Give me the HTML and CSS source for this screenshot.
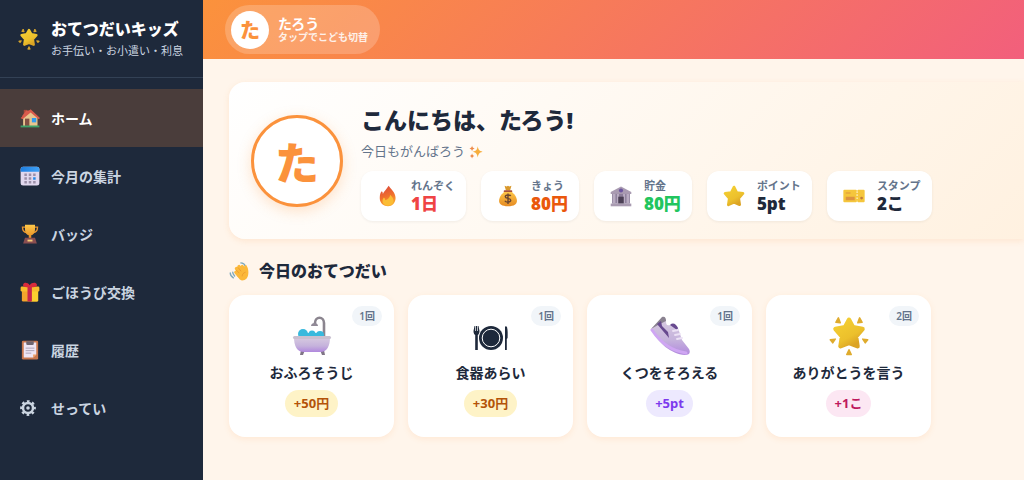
FILE: index.html
```html
<!DOCTYPE html>
<html lang="ja">
<head>
    <meta charset="UTF-8">
    <meta name="viewport" content="width=device-width, initial-scale=1.0">
    <title>おてつだいキッズ</title>
    <link rel="stylesheet" href="styles.css">
</head>
<body>

    <!-- アイコン定義 -->
    <svg class="icon-defs" aria-hidden="true">
        <defs>
            <linearGradient id="gold" x1="0" y1="0" x2="0.6" y2="1">
                <stop offset="0" stop-color="#f5d033"/>
                <stop offset="0.7" stop-color="#ecc02c"/>
                <stop offset="1" stop-color="#dba324"/>
            </linearGradient>
            <linearGradient id="amber" x1="0" y1="0" x2="0" y2="1">
                <stop offset="0" stop-color="#ffc94a"/>
                <stop offset="1" stop-color="#e58a22"/>
            </linearGradient>
            <linearGradient id="flame" x1="0" y1="0" x2="0.3" y2="1">
                <stop offset="0" stop-color="#d9433f"/>
                <stop offset="0.6" stop-color="#f0702c"/>
                <stop offset="1" stop-color="#f9a52e"/>
            </linearGradient>
            <linearGradient id="lilac" x1="0" y1="0" x2="0" y2="1">
                <stop offset="0" stop-color="#d8cce0"/>
                <stop offset="0.6" stop-color="#c5b2dc"/>
                <stop offset="1" stop-color="#b088dd"/>
            </linearGradient>
            <linearGradient id="sky" x1="0" y1="0" x2="1" y2="0">
                <stop offset="0" stop-color="#1f7fe0"/>
                <stop offset="1" stop-color="#3fa0f5"/>
            </linearGradient>
        </defs>

        <symbol id="i-glow" viewBox="0 0 32 32">
            <path fill="url(#gold)" stroke="url(#gold)" stroke-width="3.6" stroke-linejoin="round" d="M16 3l3.200 6 7.600 1.400-5.200 6 1.200 7.800-6.800-2.700-6.800 2.700 1.200-7.800-5.200-6L12.800 9z"/>
            <g fill="#dfab2e" stroke="#dfab2e" stroke-width="1.2" stroke-linejoin="round">
                <path d="M7.500 1.500l1.500 4-3.500-.5zM24.500 1.500l-1.500 4 3.500-.5zM1 19l4-.5-2 3zM31 19l-4-.5 2 3zM16 27l1.800 3.800h-3.600z"/>
            </g>
        </symbol>

        <symbol id="i-star" viewBox="0 0 32 32">
            <path fill="url(#gold)" stroke="url(#gold)" stroke-width="4" stroke-linejoin="round" d="M16 3l4 8 9 1.300-6.200 7 1.400 9.400L16 25l-8.200 3.700 1.400-9.400-6.200-7L12 11z"/>
        </symbol>

        <symbol id="i-home" viewBox="0 0 32 32">
            <path fill="#a84a3c" d="M6 3h5v10H6z"/>
            <path fill="#e8c58f" d="M5 14L17 5l11 10v14H5z"/>
            <path fill="#d95b4c" d="M17 2l15 14-2 2L17 7 4 18l-3-2z"/>
            <path fill="#d95b4c" d="M17 5L3 17l1-5L10 4h6z"/>
            <path fill="#825044" d="M8 17h7v12H8z"/>
            <path fill="#319bed" d="M19 16h7v7h-7z"/>
            <path fill="#3da36a" d="M1 28h30v3H1z"/>
        </symbol>

        <symbol id="i-calendar" viewBox="0 0 32 32">
            <rect x="1" y="1" width="30" height="30" rx="4" fill="#e1d8ee"/>
            <path fill="url(#sky)" d="M1 9V5a4 4 0 0 1 4-4h22a4 4 0 0 1 4 4v4z"/>
            <path fill="#9b8fa8" d="M7 12h4v4H7zM14 12h4v4h-4zM21 12h4v4h-4zM7 18h4v4H7zM14 18h4v4h-4zM7 24h4v4H7zM14 24h4v4h-4zM21 24h4v4h-4z"/>
            <path fill="#2388e8" d="M21 18h4v4h-4z"/>
        </symbol>

        <symbol id="i-trophy" viewBox="0 0 32 32">
            <path fill="none" stroke="#e5932f" stroke-width="2.200" d="M9 5H4c0 5 2 8 7 9M23 5h5c0 5-2 8-7 9"/>
            <path fill="url(#amber)" d="M8 1h16v8c0 5-3 8-6 9v5h-4v-5c-3-1-6-4-6-9z"/>
            <path fill="#8a4e50" d="M8 22h16l3 9H5z"/>
            <path fill="#f5cf7b" d="M12 25h8v3h-8z"/>
        </symbol>

        <symbol id="i-gift" viewBox="0 0 32 32">
            <path fill="#f3a52c" d="M3 13h26v16a2 2 0 0 1-2 2H5a2 2 0 0 1-2-2z"/>
            <path fill="#fcd02f" d="M18 13h11v16a2 2 0 0 1-2 2h-9z"/>
            <rect x="1" y="7" width="30" height="8" rx="2" fill="#f8bd2d"/>
            <path fill="#c9264c" d="M12 7h7v24h-7z"/>
            <path fill="#d92b3b" d="M15.500 8C9 9 4 8 5 4s7-4 10.500 1C19 0 26 0 27 4s-5 5-11.500 4z"/>
        </symbol>

        <symbol id="i-clipboard" viewBox="0 0 32 32">
            <rect x="3" y="1" width="26" height="30" rx="2" fill="#c9784f"/>
            <path fill="#eee5f4" d="M6 4h20v19l-5 5H6z"/>
            <path fill="#f0a060" d="M26 23l-5 5v-5z"/>
            <path fill="#6d6470" d="M10 2h12v4a2 2 0 0 1-2 2h-8a2 2 0 0 1-2-2z"/>
            <path stroke="#aaa0b4" stroke-width="1.500" d="M9 13h14M9 17h14M9 21h9"/>
        </symbol>

        <symbol id="i-gear" viewBox="0 0 32 32">
            <g fill="none" stroke="currentColor">
                <circle cx="16" cy="16" r="10" stroke-width="5"/>
                <circle cx="16" cy="16" r="13.500" stroke-width="4.500" stroke-dasharray="5.300 5.303" stroke-dashoffset="2.650"/>
            </g>
            <circle cx="16" cy="16" r="3.600" fill="currentColor"/>
        </symbol>

        <symbol id="i-sparkles" viewBox="0 0 32 32">
            <path fill="#f7ae3d" d="M20 3c1.500 8 3 10 11 12.500-8 2.500-9.500 5-11 13-1.500-8-3-10.500-11-13C17 13 18.500 11 20 3z"/>
            <path fill="#ee8b4a" d="M7 1c.9 4.500 1.800 5.500 6 7-4.200 1.200-5.100 2.500-6 7-.9-4.500-1.800-5.800-6-7 4.200-1.500 5.100-2.500 6-7zM7 19c.8 3.500 1.600 4.700 5 6-3.400 1.200-4.200 2.500-5 6-.8-3.500-1.600-4.800-5-6 3.400-1.300 4.200-2.500 5-6z"/>
        </symbol>

        <symbol id="i-fire" viewBox="0 0 32 32">
            <path fill="url(#flame)" d="M17 1c2 4 10 9 10 18 0 7-5 12-11 12S4 27 4 19c0-5 1-9 3-10 1 1 1.500 2 1.500 4C10 9 14 6 17 1z"/>
            <path fill="#fbbd35" d="M19 14c4 4 5 6 5 9 0 4-3 7-8 7s-8-3-8-7c0-2 1-4 2-5 1 1 2 2 2 4 4-1 7-4 7-8z"/>
        </symbol>

        <symbol id="i-money" viewBox="0 0 32 32">
            <path fill="#d9982c" d="M11 1l3 1 2-1 2 1 3-1-2 7h-6z"/>
            <path fill="url(#amber)" d="M12 9h8c5 3 9 9 9 14s-4 8-13 8S3 28 3 23 7 12 12 9z"/>
            <path stroke="#a8513a" stroke-width="2.500" stroke-linecap="round" d="M11 9h10"/>
            <path fill="none" stroke="#6b4630" stroke-width="2" d="M20 16c-1-2-8-2-8 1s8 2 8 5-7 4-8.500 1M16 12.500v15"/>
        </symbol>

        <symbol id="i-bank" viewBox="0 0 32 32">
            <path fill="#a99bb1" d="M16 2l15 8v3H1v-3z"/>
            <path fill="#8b7d98" d="M3 13h26v14H3z"/>
            <path fill="#b9acc2" d="M4 13h4v14H4zM10 13h3v14h-3zM19 13h3v14h-3zM24 13h4v14h-4z"/>
            <path fill="#4b4055" d="M12 17h8v10h-8z"/>
            <path fill="#a99bb1" d="M1 27h30v4H1z"/>
            <circle cx="16" cy="8" r="3" fill="#6c559f"/>
        </symbol>

        <symbol id="i-ticket" viewBox="0 0 32 32">
            <path fill="#f5c63c" d="M2 7h17l1.500 1.500L22 7h8a1.500 1.500 0 0 1 1.500 1.500v15A1.500 1.500 0 0 1 30 25h-8l-1.500-1.500L19 25H2a1.500 1.500 0 0 1-1.500-1.500v-15A1.500 1.500 0 0 1 2 7z"/>
            <path stroke="#fff8e4" stroke-width="1.500" stroke-dasharray="2.500 2" d="M20.500 9v14"/>
            <path fill="#dd9340" d="M4 11h7v1.500H4zM4 17h13v5H4z"/>
            <circle cx="27" cy="19" r="2" fill="#c17a3c"/>
        </symbol>

        <symbol id="i-wave" viewBox="0 0 32 32">
            <path fill="none" stroke="#7fa9bd" stroke-width="2.200" stroke-linecap="round" d="M2 19c0 4 2 6 5 8M6 18c0 3 1 4 3 6M19 3c4 0 6 2 7 5"/>
            <g fill="none" stroke="#fbb83a" stroke-width="5.500" stroke-linecap="round">
                <path d="M11 18l5 6M12 12l7 8M16 9l5 7M21 9l3 5"/>
            </g>
            <path fill="#fbb83a" d="M12 20l11-10c2-1 3-5 5-3 2 3 3 6 3 11 0 9-4 13-10 13-4 0-7-5-9-11z"/>
            <path fill="none" stroke="#e8962e" stroke-width="1.200" stroke-linecap="round" d="M16 19l-4-4M19 16l-4-5M21 24c0-3 2-5 5-6"/>
        </symbol>

        <symbol id="i-bath" viewBox="0 0 40 40">
            <path fill="none" stroke="#8b858f" stroke-width="2.600" d="M32 21V7c0-7-9-7-9 0v1"/>
            <path fill="#918a97" d="M19 10c0-4 7-4 7 0z"/>
            <path fill="#807586" d="M9 34h4l-2 5H8zM28 34h4l1 5h-3z"/>
            <g fill="#38b9dd">
                <circle cx="11" cy="18" r="5"/>
                <circle cx="20" cy="18" r="3.500"/>
                <circle cx="28" cy="19" r="4"/>
                <path d="M7 17h23v4H7z"/>
            </g>
            <path fill="url(#lilac)" d="M2 21h36c0 9-3 15-10 15H12C5 36 2 30 2 21z"/>
            <rect x="1" y="20" width="38" height="3" rx="1.500" fill="#c9c0d0"/>
        </symbol>

        <symbol id="i-plate" viewBox="0 0 40 40">
            <circle cx="20" cy="22" r="12" fill="currentColor"/>
            <circle cx="20" cy="22" r="8.800" fill="none" stroke="#fff" stroke-width="1"/>
            <path fill="currentColor" d="M2.500 15l1-5h.8v5h.7v-5h1v5h.7v-5h.8l1 5c0 2-.8 3.500-1.700 4v15H4.200V19c-1-.5-1.700-2-1.700-4zM34 34V11c0-1 1.500-1 2 0 .8 3 .8 7 .6 11l-.8 1v11z"/>
        </symbol>

        <symbol id="i-shoe" viewBox="0 0 40 40">
            <path fill="url(#lilac)" d="M1 13L13 2c2 0 3 1 3 3 0 4 1 5 4 4 3-2 7 0 8 3l4 12 7 9c2 4 0 6-4 6-14-1-27-12-34-26z"/>
            <path fill="#8a8290" d="M1 13L12 1c3-1 4 1 4 4l-8 4z"/>
            <path fill="#67498f" d="M7 8l4-3 1 5 6 6 1 6zM20 9c3-3 6-1 8 3l-1 2z"/>
            <path fill="none" stroke="#ece2f5" stroke-width="1.800" stroke-linecap="round" d="M23 15l5-1M25 19l5-1M27 23l5-1"/>
            <path fill="none" stroke="#cfa6f3" stroke-width="3" stroke-linecap="round" d="M2 14c8 12 20 21 34 23"/>
        </symbol>
    </svg>

    <aside class="sidebar">
        <div class="brand">
            <svg class="icon"><use href="#i-glow"/></svg>
            <div>
                <div class="brand-name">おてつだいキッズ</div>
                <div class="brand-sub">お手伝い・お小遣い・利息</div>
            </div>
        </div>
        <nav class="menu">
            <a href="#" class="active"><svg class="icon"><use href="#i-home"/></svg>ホーム</a>
            <a href="#"><svg class="icon"><use href="#i-calendar"/></svg>今月の集計</a>
            <a href="#"><svg class="icon"><use href="#i-trophy"/></svg>バッジ</a>
            <a href="#"><svg class="icon"><use href="#i-gift"/></svg>ごほうび交換</a>
            <a href="#"><svg class="icon"><use href="#i-clipboard"/></svg>履歴</a>
            <a href="#"><svg class="icon gear"><use href="#i-gear"/></svg>せってい</a>
        </nav>
    </aside>

    <div class="page">
        <header class="topbar">
            <button class="child-switch">
                <span class="avatar-small">た</span>
                <span>
                    <span class="child-name">たろう</span>
                    <span class="child-hint">タップでこども切替</span>
                </span>
            </button>
        </header>

        <main>
            <section class="hero">
                <div class="avatar">た</div>
                <div class="hero-body">
                    <h1>こんにちは、たろう!</h1>
                    <p>今日もがんばろう <svg class="icon"><use href="#i-sparkles"/></svg></p>
                    <div class="stats">
                        <div class="stat">
                            <svg class="icon"><use href="#i-fire"/></svg>
                            <div><div class="label">れんぞく</div><div class="value red">1日</div></div>
                        </div>
                        <div class="stat">
                            <svg class="icon"><use href="#i-money"/></svg>
                            <div><div class="label">きょう</div><div class="value orange">80円</div></div>
                        </div>
                        <div class="stat">
                            <svg class="icon"><use href="#i-bank"/></svg>
                            <div><div class="label">貯金</div><div class="value green">80円</div></div>
                        </div>
                        <div class="stat">
                            <svg class="icon"><use href="#i-star"/></svg>
                            <div><div class="label">ポイント</div><div class="value">5pt</div></div>
                        </div>
                        <div class="stat">
                            <svg class="icon"><use href="#i-ticket"/></svg>
                            <div><div class="label">スタンプ</div><div class="value">2こ</div></div>
                        </div>
                    </div>
                </div>
            </section>

            <h2><svg class="icon"><use href="#i-wave"/></svg>今日のおてつだい</h2>

            <div class="chores">
                <button class="chore">
                    <span class="count">1回</span>
                    <svg class="icon"><use href="#i-bath"/></svg>
                    <span class="chore-name">おふろそうじ</span>
                    <span class="reward yen">+50円</span>
                </button>
                <button class="chore">
                    <span class="count">1回</span>
                    <svg class="icon"><use href="#i-plate"/></svg>
                    <span class="chore-name">食器あらい</span>
                    <span class="reward yen">+30円</span>
                </button>
                <button class="chore">
                    <span class="count">1回</span>
                    <svg class="icon"><use href="#i-shoe"/></svg>
                    <span class="chore-name">くつをそろえる</span>
                    <span class="reward point">+5pt</span>
                </button>
                <button class="chore">
                    <span class="count">2回</span>
                    <svg class="icon"><use href="#i-glow"/></svg>
                    <span class="chore-name">ありがとうを言う</span>
                    <span class="reward stamp">+1こ</span>
                </button>
            </div>
        </main>
    </div>

</body>
</html>
```

FILE: styles.css
```css
* {
    box-sizing: border-box;
}
body {
    margin: 0;
    min-height: 100vh;
    display: flex;
    font-family: "Noto Sans", "Noto Sans CJK JP", sans-serif;
    color: #1e293b;
    background-color: #fff5eb;
}
button {
    font-family: inherit;
    color: inherit;
    border: none;
    cursor: pointer;
}
.icon {
    display: block;
    flex-shrink: 0;
    width: 20px;
    height: 20px;
}
.icon-defs {
    position: absolute;
    width: 0;
    height: 0;
}

/* サイドバー */
.sidebar {
    flex: 0 0 203px;
    background-color: #1e293b;
    color: #cbd5e1;
}
.brand {
    display: flex;
    align-items: center;
    gap: 11px;
    height: 78px;
    padding: 0 18px;
    border-bottom: 1px solid #334155;
    white-space: nowrap;
}
.brand .icon {
    width: 22px;
    height: 22px;
}
.brand-name {
    font-size: 16px;
    line-height: 24px;
    font-weight: 900;
    color: white;
}
.brand-sub {
    font-size: 11px;
    line-height: 20px;
}
.menu {
    padding-top: 11px;
}
.menu a {
    display: flex;
    align-items: center;
    gap: 11px;
    height: 58px;
    padding: 0 20px;
    font-size: 14px;
    font-weight: 600;
    color: #cbd5e1;
    text-decoration: none;
}
.menu a.active {
    background-color: rgba(251, 146, 60, 0.2);
    color: white;
}
.menu .gear {
    padding-right: 4px;
}

/* ヘッダー */
.page {
    flex: 1;
    min-width: 0;
}
.topbar {
    display: flex;
    align-items: center;
    height: 59px;
    padding: 0 22px;
    background: linear-gradient(135deg, #fb923c, #f25f7c);
}
.child-switch {
    display: flex;
    align-items: center;
    gap: 9px;
    height: 49px;
    padding: 0 12px 0 6px;
    border-radius: 25px;
    background-color: rgba(255, 255, 255, 0.2);
    color: white;
    text-align: left;
    font-weight: 700;
}
.child-name, .child-hint {
    display: block;
}
.child-name {
    font-size: 14px;
    line-height: 15px;
}
.child-hint {
    font-size: 10px;
    line-height: 12px;
    opacity: 0.85;
}
.avatar-small, .avatar {
    display: flex;
    align-items: center;
    justify-content: center;
    flex-shrink: 0;
    border-radius: 50%;
    background-color: white;
    color: #fb923c;
    font-weight: 900;
}
.avatar-small {
    width: 38px;
    height: 38px;
    font-size: 20px;
}

/* あいさつカード */
main {
    padding: 23px 0 23px 26px;
}
.hero {
    display: flex;
    align-items: center;
    gap: 18px;
    padding: 18px 22px;
    border-radius: 16px 0 0 16px;
    background: linear-gradient(135deg, #ffffff, #fff1e0);
    box-shadow: 0 2px 6px rgba(251, 146, 60, 0.15);
}
.avatar {
    width: 92px;
    height: 92px;
    border: 3px solid #fb923c;
    font-size: 44px;
    box-shadow: 0 4px 14px rgba(251, 146, 60, 0.25);
}
h1 {
    margin: 0;
    font-size: 23px;
    line-height: 40px;
    font-weight: 900;
}
.hero p {
    display: flex;
    align-items: center;
    gap: 4px;
    margin: 0 0 8px;
    font-size: 13px;
    line-height: 23px;
    color: #64748b;
}
.hero p .icon {
    width: 14px;
    height: 14px;
}
.stats {
    display: flex;
    gap: 15px;
}
.stat {
    display: flex;
    align-items: center;
    gap: 12px;
    height: 50px;
    padding: 0 11px 0 16px;
    border-radius: 12px;
    background-color: white;
    box-shadow: 0 1px 3px rgba(0, 0, 0, 0.06);
    white-space: nowrap;
}
.stat .icon {
    width: 22px;
    height: 22px;
}
.label {
    font-size: 11px;
    line-height: 16px;
    font-weight: 600;
    color: #64748b;
}
.value {
    font-size: 17px;
    line-height: 20px;
    font-weight: 900;
}
.red { color: #ef4444; }
.orange { color: #ea580c; }
.green { color: #22c55e; }

/* お手伝いカード */
h2 {
    display: flex;
    align-items: center;
    gap: 10px;
    margin: 20px 0 12px;
    font-size: 16px;
    line-height: 24px;
    font-weight: 800;
}
.chores {
    display: grid;
    grid-template-columns: repeat(auto-fill, 165px);
    gap: 14px;
}
.chore {
    position: relative;
    display: flex;
    flex-direction: column;
    align-items: center;
    padding: 21px 10px 20px;
    border-radius: 16px;
    background-color: white;
    box-shadow: 0 2px 6px rgba(251, 146, 60, 0.12);
}
.chore .icon {
    width: 40px;
    height: 40px;
}
.chore-name {
    margin: 6px 0;
    font-size: 14px;
    line-height: 22px;
    font-weight: 700;
}
.count {
    position: absolute;
    top: 11px;
    right: 12px;
    padding: 0 7px;
    border-radius: 10px;
    background-color: #f1f5f9;
    color: #64748b;
    font-size: 10px;
    line-height: 20px;
    font-weight: 600;
}
.reward {
    padding: 0 9px;
    border-radius: 14px;
    font-size: 13px;
    line-height: 27px;
    font-weight: 700;
}
.yen {
    background-color: #fef3c7;
    color: #b45309;
}
.point {
    background-color: #ede9fe;
    color: #7c3aed;
}
.stamp {
    background-color: #fce7f3;
    color: #be185d;
}
```
